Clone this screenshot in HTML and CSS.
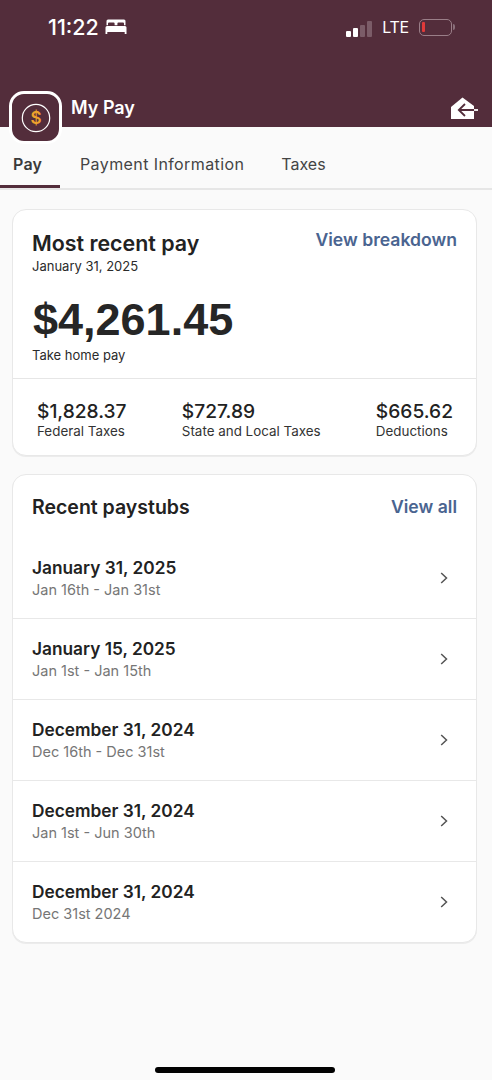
FILE: index.html
```html
<!DOCTYPE html>
<html lang="en">
<head>
<meta charset="utf-8">
<title>My Pay</title>
<link rel="stylesheet" href="styles.css">
</head>
<body>
<div class="page">
  <header class="header">
    <div class="status">
      <div class="status-left">
        <span class="time">11:22</span>
        <svg class="bed" viewBox="0 0 22 15" width="22" height="15"><path fill="#fff" d="M3 0.500h16a1.500 1.500 0 0 1 1.500 1.500v4.200H19V4.600a1 1 0 0 0-1-1h-4.600a1 1 0 0 0-1 1v1.600H9.600V4.600a1 1 0 0 0-1-1H4a1 1 0 0 0-1 1v1.600H1.500V2A1.500 1.500 0 0 1 3 0.500zM2 7h18a1.500 1.500 0 0 1 1.500 1.500V15h-1.800v-2H2.300v2H0.500V8.500A1.500 1.500 0 0 1 2 7z"/></svg>
      </div>
      <div class="status-right">
        <div class="signal"><i class="b1"></i><i class="b2"></i><i class="b3"></i><i class="b4"></i></div>
        <span class="lte">LTE</span>
        <div class="battery"><i class="charge"></i></div>
        <i class="battery-cap"></i>
      </div>
    </div>
    <div class="title-row">
      <span class="title">My Pay</span>
      <svg class="exit" viewBox="0 0 28 23" width="28" height="23"><path fill="#fff" d="M1 10 12.500 0.500 24 9V22H1z"/><path d="M15 7 8.800 13 15 19M9 13H24" fill="none" stroke="#532d3b" stroke-width="1.800"/><path d="M24 13h4" fill="none" stroke="#fff" stroke-width="1.800"/></svg>
    </div>
    <div class="app-icon">
      <svg viewBox="0 0 30 30" width="30" height="30"><circle cx="15" cy="15" r="13.700" fill="none" stroke="#fff" stroke-width="1.200"/><text x="15" y="21" text-anchor="middle" class="dollar">$</text></svg>
    </div>
  </header>

  <nav class="tabs">
    <span class="tab active">Pay</span>
    <span class="tab info">Payment Information</span>
    <span class="tab taxes">Taxes</span>
  </nav>

  <main class="content">
    <section class="card">
      <div class="recent">
        <div class="recent-head">
          <div>
            <h2 class="card-title">Most recent pay</h2>
            <div class="small date">January 31, 2025</div>
          </div>
          <a class="link">View breakdown</a>
        </div>
        <div class="amount">$4,261.45</div>
        <div class="small">Take home pay</div>
      </div>
      <div class="stats">
        <div class="stat"><div class="stat-value">$1,828.37</div><div class="stat-label">Federal Taxes</div></div>
        <div class="stat"><div class="stat-value">$727.89</div><div class="stat-label">State and Local Taxes</div></div>
        <div class="stat"><div class="stat-value">$665.62</div><div class="stat-label">Deductions</div></div>
      </div>
    </section>

    <section class="card">
      <div class="stubs-head">
        <h2 class="card-title stubs-title">Recent paystubs</h2>
        <a class="link">View all</a>
      </div>
      <div class="stub">
        <div><div class="stub-date">January 31, 2025</div><div class="stub-range">Jan 16th - Jan 31st</div></div>
        <svg class="chev" viewBox="0 0 8 12" width="8" height="12"><path d="M1.200 1 6.500 6 1.200 11" fill="none" stroke="#555" stroke-width="1.500"/></svg>
      </div>
      <div class="stub">
        <div><div class="stub-date">January 15, 2025</div><div class="stub-range">Jan 1st - Jan 15th</div></div>
        <svg class="chev" viewBox="0 0 8 12" width="8" height="12"><path d="M1.200 1 6.500 6 1.200 11" fill="none" stroke="#555" stroke-width="1.500"/></svg>
      </div>
      <div class="stub">
        <div><div class="stub-date">December 31, 2024</div><div class="stub-range">Dec 16th - Dec 31st</div></div>
        <svg class="chev" viewBox="0 0 8 12" width="8" height="12"><path d="M1.200 1 6.500 6 1.200 11" fill="none" stroke="#555" stroke-width="1.500"/></svg>
      </div>
      <div class="stub">
        <div><div class="stub-date">December 31, 2024</div><div class="stub-range">Jan 1st - Jun 30th</div></div>
        <svg class="chev" viewBox="0 0 8 12" width="8" height="12"><path d="M1.200 1 6.500 6 1.200 11" fill="none" stroke="#555" stroke-width="1.500"/></svg>
      </div>
      <div class="stub">
        <div><div class="stub-date">December 31, 2024</div><div class="stub-range">Dec 31st 2024</div></div>
        <svg class="chev" viewBox="0 0 8 12" width="8" height="12"><path d="M1.200 1 6.500 6 1.200 11" fill="none" stroke="#555" stroke-width="1.500"/></svg>
      </div>
    </section>
  </main>
  <div class="home-bar"></div>
</div>
</body>
</html>
```
FILE: styles.css
```css
* { box-sizing: border-box; }
html, body { margin: 0; padding: 0; }
body { font-family: Inter, "Liberation Sans", sans-serif; background: #fafafa; color: #222; }
.page { width: 492px; height: 1080px; display: flex; flex-direction: column; overflow: hidden; }

.header { position: relative; z-index: 2; height: 127px; flex: none; background: #532d3b; color: #fff; display: flex; flex-direction: column; justify-content: space-between; }
.status { display: flex; justify-content: space-between; padding: 15px 37px 0 48px; }
.status-left { display: flex; align-items: center; gap: 6px; height: 24px; }
.time { font-size: 21.500px; font-weight: 500; line-height: 24px; }
.bed { display: block; margin-top: -1px; }
.status-right { display: flex; align-items: center; height: 24px; }
.signal { display: flex; align-items: flex-end; gap: 2px; height: 16px; margin-top: 3px; }
.signal i { display: block; width: 5px; border-radius: 1px; background: #fff; }
.signal .b1 { height: 6px; }
.signal .b2 { height: 9px; }
.signal .b3 { height: 12px; background: #7b5c68; }
.signal .b4 { height: 16px; background: #7b5c68; }
.lte { font-size: 16px; font-weight: 400; margin-left: 10px; line-height: 24px; letter-spacing: -0.200px; }
.battery { width: 33px; height: 17px; margin-left: 10px; border: 1.500px solid #9a7e88; border-radius: 5px; padding: 2.500px 2px; }
.charge { display: block; width: 3px; height: 100%; background: #e03a3a; border-radius: 1px; }
.battery-cap { display: block; width: 2px; height: 6px; background: #8a6f7a; border-radius: 0 2px 2px 0; margin-left: 1px; }
.title-row { display: flex; justify-content: space-between; align-items: flex-end; padding: 0 14px 7px 71px; }
.title { font-size: 18px; font-weight: 600; line-height: 22px; margin-bottom: 1px; }
.exit { display: block; }
.app-icon { position: absolute; left: 9px; top: 91px; width: 53px; height: 53px; display: flex; align-items: center; justify-content: center; background: #532d3b; border: 3px solid #fff; border-radius: 15px; }
.dollar { font-size: 17px; font-weight: 600; fill: #eda22c; font-family: Inter, sans-serif; }

.tabs { height: 63px; flex: none; display: flex; border-bottom: 2px solid #e6e6e6; background: #fafafa; font-size: 16px; line-height: 20px; color: #444; letter-spacing: 0.400px; }
.tab { display: block; padding-top: 27px; }
.tab.active { width: 60px; padding-left: 13px; font-weight: 600; color: #3a3a3a; letter-spacing: 0.200px; border-bottom: 3px solid #532d3b; }
.tab.info { margin-left: 20px; }
.tab.taxes { margin-left: 37px; letter-spacing: 0; }

.content { display: flex; flex-direction: column; gap: 18px; padding: 19px 15px 0 12px; }
.card { background: #fff; border: 1.500px solid #e8e8e8; border-radius: 14px; overflow: hidden; box-shadow: 0 1px 0 #ececec; }
.recent { height: 169px; padding: 21px 19px 0 19px; border-bottom: 1.500px solid #e6e6e6; }
.recent-head { display: flex; justify-content: space-between; align-items: flex-start; }
.card-title { margin: 0; font-size: 21.400px; font-weight: 600; line-height: 25px; color: #222; }
.small { font-size: 13px; line-height: 16px; color: #2b2b2b; }
.date { margin-top: 2px; }
.link { font-size: 17.600px; font-weight: 600; line-height: 20px; color: #4a6490; margin-top: -1px; }
.amount { font-family: "Liberation Sans", Arial, sans-serif; font-size: 45px; font-weight: 700; line-height: 52px; margin: 20px 0 1px 1px; color: #262626; }
.stats { display: flex; justify-content: space-between; padding: 21px 23px 0 24px; height: 76px; }
.stat-value { font-size: 19.200px; font-weight: 500; line-height: 23px; color: #222; }
.stat-label { font-size: 13.400px; line-height: 17px; color: #333; }

.stubs-head { display: flex; justify-content: space-between; align-items: center; height: 63px; padding: 2px 19px 0; }
.stubs-title { font-size: 19.500px; }
.stub { height: 81px; display: flex; justify-content: space-between; align-items: center; padding: 0 28px 0 19px; border-bottom: 1.500px solid #e8e8e8; }
.stub:last-child { border-bottom: none; height: 80px; }
.stub-date { font-size: 17.300px; font-weight: 600; line-height: 22px; color: #222; }
.stub-range { font-size: 14.500px; line-height: 18px; margin-top: 2px; color: #767676; }
.chev { display: block; }

.home-bar { width: 180px; height: 6px; margin: auto 0 7px 155px; background: #000; border-radius: 3px; }
```
